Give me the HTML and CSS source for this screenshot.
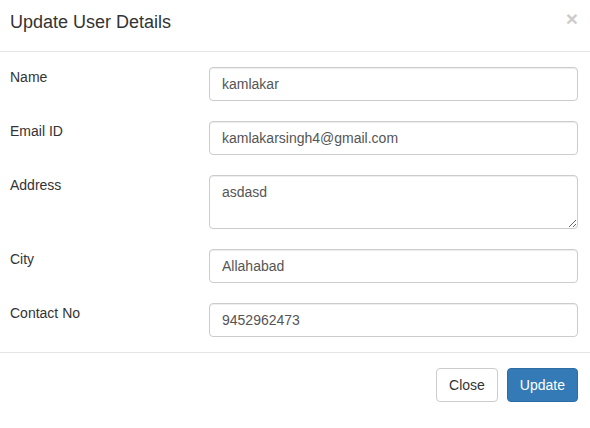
FILE: index.html
```html
<!DOCTYPE html>
<html>
<head>
<meta charset="utf-8">
<link rel="stylesheet" href="styles.css">
</head>
<body>
<div class="modal">
  <div class="modal-header">
    <h4 class="modal-title">Update User Details</h4>
    <button class="close" type="button">&times;</button>
  </div>
  <form class="modal-body">
    <div class="row">
      <label class="label">Name</label>
      <input class="control" type="text" value="kamlakar">
    </div>
    <div class="row">
      <label class="label">Email ID</label>
      <input class="control" type="text" value="kamlakarsingh4@gmail.com">
    </div>
    <div class="row">
      <label class="label">Address</label>
      <textarea class="control area">asdasd</textarea>
    </div>
    <div class="row">
      <label class="label">City</label>
      <input class="control" type="text" value="Allahabad">
    </div>
    <div class="row">
      <label class="label">Contact No</label>
      <input class="control" type="text" value="9452962473">
    </div>
  </form>
  <div class="modal-footer">
    <button class="btn btn-default" type="button">Close</button>
    <button class="btn btn-primary" type="button">Update</button>
  </div>
</div>
</body>
</html>
```

FILE: styles.css
```css
* { box-sizing: border-box; }
html, body {
  margin: 0;
  padding: 0;
  background: #fff;
}
body {
  font-family: "Liberation Sans", Arial, Helvetica, sans-serif;
  font-size: 14px;
  line-height: 20px;
  color: #333;
}
.modal {
  width: 590px;
  background: #fff;
}
.modal-header {
  display: flex;
  justify-content: space-between;
  align-items: flex-start;
  height: 52px;
  padding: 10px 12px 0 10px;
  border-bottom: 1px solid #e5e5e5;
}
.modal-title {
  margin: 0;
  font-size: 18px;
  line-height: 24px;
  font-weight: 500;
  color: #333;
}
.close {
  margin: 0;
  padding: 0;
  border: 0;
  background: transparent;
  font-family: "Liberation Sans", Arial, sans-serif;
  font-size: 21px;
  font-weight: 700;
  line-height: 18px;
  color: #000;
  opacity: 0.2;
  cursor: pointer;
}
.modal-body {
  display: flex;
  flex-direction: column;
  gap: 20px;
  margin: 0;
  padding: 15px 12px 15px 10px;
}
.row {
  display: grid;
  grid-template-columns: 199px 1fr;
  align-items: start;
}
.label {
  display: block;
  font-weight: 400;
  line-height: 20px;
  color: #333;
}
.control {
  display: block;
  width: 100%;
  height: 34px;
  margin: 0;
  padding: 6px 12px;
  font-family: "Liberation Sans", Arial, sans-serif;
  font-size: 14px;
  line-height: 20px;
  color: #555;
  background: #fff;
  border: 1px solid #ccc;
  border-radius: 4px;
  box-shadow: inset 0 1px 1px rgba(0, 0, 0, 0.075);
}
.area {
  height: 54px;
  resize: vertical;
}
.modal-footer {
  display: flex;
  justify-content: flex-end;
  gap: 9px;
  padding: 15px 12px 15px 15px;
  border-top: 1px solid #e5e5e5;
}
.btn {
  height: 34px;
  padding: 6px 12px;
  font-family: "Liberation Sans", Arial, sans-serif;
  font-size: 14px;
  line-height: 20px;
  border: 1px solid transparent;
  border-radius: 4px;
  cursor: pointer;
}
.btn-default {
  color: #333;
  background: #fff;
  border-color: #ccc;
}
.btn-primary {
  color: #fff;
  background: #337ab7;
  border-color: #2e6da4;
}
```
